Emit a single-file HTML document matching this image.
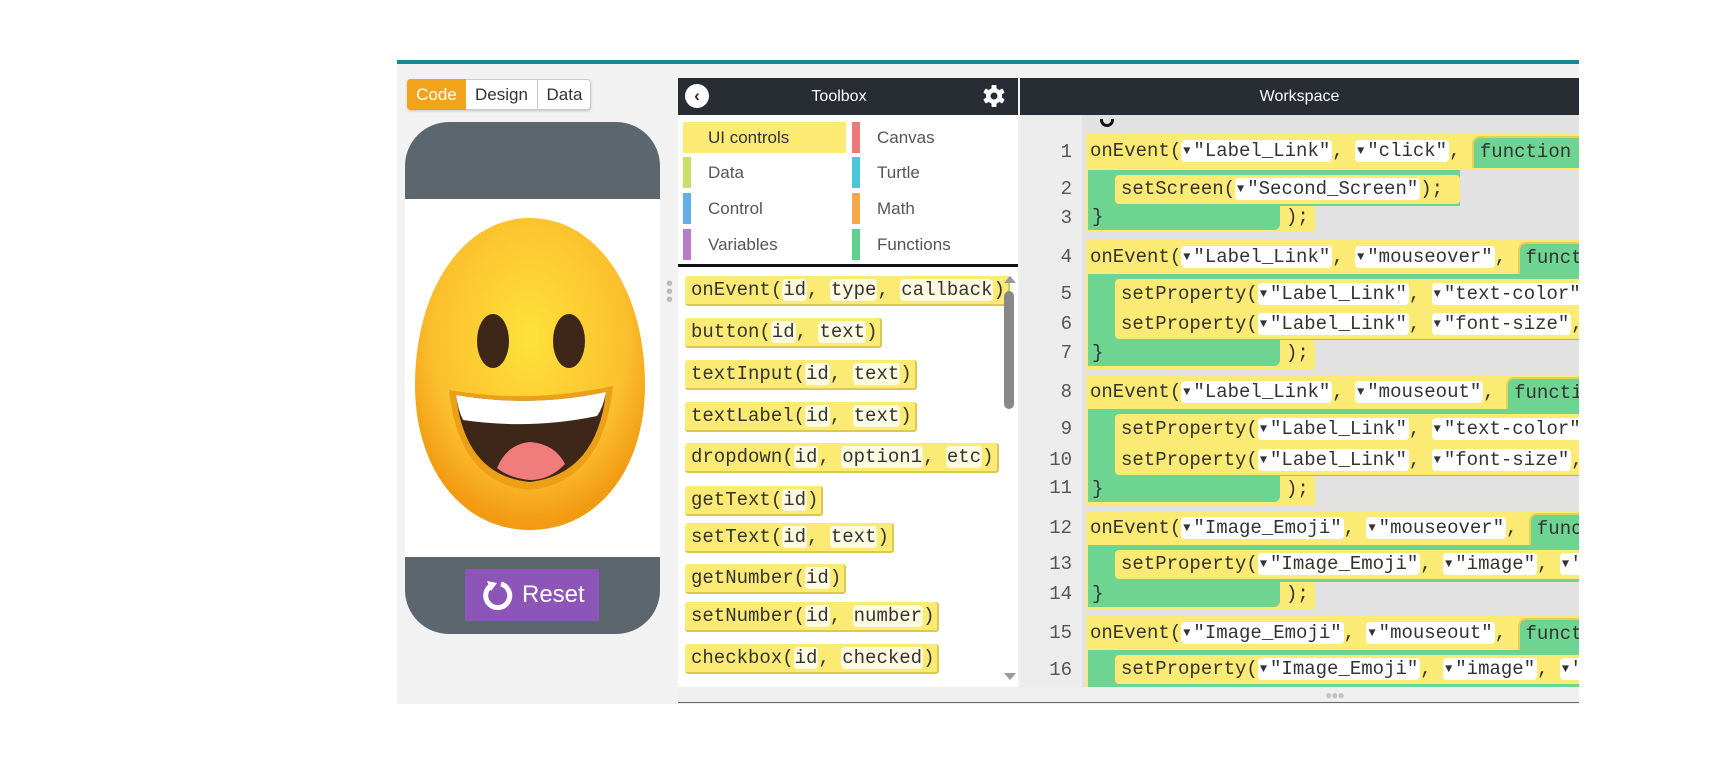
<!DOCTYPE html>
<html><head><meta charset="utf-8"><style>
*{box-sizing:border-box;margin:0;padding:0}
body{width:1715px;height:761px;background:#fff;position:relative;overflow:hidden;font-family:"Liberation Sans",sans-serif}
.a{position:absolute}
.mono{font-family:"Liberation Mono","DejaVu Sans Mono",monospace;font-size:19px;color:#333;white-space:nowrap}
.tb{position:absolute;left:685px;height:30px;background:#fbea73;border-bottom:2px solid #d9c94f;border-right:2px solid #d9c94f;border-radius:3px;padding:0 3px 0 6px;line-height:28px}
.p{background:#fffbe0;border-radius:4px;padding:0 1px}
.s{background:#fff;border-radius:4px;padding:0 2px}
.tri{font-size:12px;vertical-align:2px;margin-right:3px}
.ln{position:absolute;left:1034px;width:38px;text-align:right;font-family:"Liberation Mono",monospace;font-size:19px;color:#555}
.y{background:#fbea73}
.g{background:#6dd492}
.fn{display:inline-block;background:#6dd492;border-top:2px solid #e2d25a;border-left:2px solid #e2d25a;border-radius:8px 0 0 0;height:32px;line-height:28px;padding-left:6px;width:300px;vertical-align:top;margin-top:2px}
.cat{position:absolute;font-size:17px;color:#555;height:31px;line-height:31px}
.bar{position:absolute;width:8px;height:31px}
</style></head><body>
<!-- frame -->
<div class="a" style="left:397px;top:60px;width:1182px;height:4px;background:#138a93"></div>
<div class="a" style="left:397px;top:64px;width:1182px;height:640px;background:#f2f2f2"></div>

<!-- tabs -->
<div class="a" style="left:407px;top:79px;width:184px;height:31px;border:1px solid #ccc;border-radius:4px;background:#fff;box-shadow:0 1px 2px rgba(0,0,0,.2)"></div>
<div class="a" style="left:407px;top:79px;width:59px;height:31px;background:#f4a31c;border-radius:4px 0 0 4px;color:#fff;font-size:17px;line-height:31px;text-align:center">Code</div>
<div class="a" style="left:466px;top:79px;width:72px;height:31px;border-right:1px solid #ccc;color:#333;font-size:17px;line-height:31px;text-align:center">Design</div>
<div class="a" style="left:538px;top:79px;width:53px;height:31px;color:#333;font-size:17px;line-height:31px;text-align:center">Data</div>

<!-- phone -->
<div class="a" style="left:405px;top:122px;width:255px;height:512px;background:#5b666e;border-radius:44px"></div>
<div class="a" style="left:405px;top:199px;width:255px;height:358px;background:#fff"></div>
<svg class="a" style="left:405px;top:199px" width="255" height="358" viewBox="408 199 255 358">
<defs><radialGradient id="eg" cx="0.5" cy="0.38" r="0.6"><stop offset="0" stop-color="#fde23a"/><stop offset="0.7" stop-color="#fbc02d"/><stop offset="1" stop-color="#f29a12"/></radialGradient></defs>
<path d="M533 218 C600 218 648 290 648 385 C648 470 600 530 533 530 C466 530 418 470 418 385 C418 290 466 218 533 218Z" fill="url(#eg)"/>
<ellipse cx="496" cy="341" rx="16" ry="27" fill="#3e2719"/>
<ellipse cx="572" cy="341" rx="16" ry="27" fill="#3e2719"/>
<path d="M452 390 Q533 404 616 386 Q606 482 533 490 Q462 484 452 390Z" fill="#eba018"/>
<path d="M459 395 Q533 408 609 392 Q600 474 533 482 Q468 476 459 395Z" fill="#3e2719"/>
<path d="M459 395 Q533 408 609 392 Q606 408 600 416 Q533 430 466 420 Q461 410 459 395Z" fill="#fff"/>
<path d="M500 468 Q510 444 533 442 Q558 444 568 464 Q553 480 533 480 Q512 478 500 468Z" fill="#f07c7c"/>
</svg>
<div class="a" style="left:465px;top:569px;width:134px;height:52px;background:#8e55b9;border-radius:2px;color:#fff;font-size:24px;line-height:52px;padding-left:57px">Reset</div>
<svg class="a" style="left:481px;top:579px" width="32" height="32" viewBox="0 0 32 32"><path d="M11 6 A12 12 0 1 0 20 5" fill="none" stroke="#fff" stroke-width="5"/><path d="M6 2 L16 4 L10 12Z" fill="#fff"/></svg>

<!-- toolbox -->
<div class="a" style="left:678px;top:78px;width:340px;height:37px;background:#272d33"></div>
<div class="a" style="left:685px;top:84px;width:24px;height:24px;border-radius:50%;background:#fff;color:#272d33;font-size:17px;line-height:24px;text-align:center;font-weight:bold">‹</div>
<div class="a" style="left:778px;top:78px;width:122px;text-align:center;color:#fff;font-size:16px;line-height:37px">Toolbox</div>
<svg class="a" style="left:982px;top:84px" width="24" height="24" viewBox="0 0 24 24"><g fill="#fff"><circle cx="12" cy="12" r="8"/><rect x="9.5" y="1" width="5" height="22" rx="1"/><rect x="9.5" y="1" width="5" height="22" rx="1" transform="rotate(60 12 12)"/><rect x="9.5" y="1" width="5" height="22" rx="1" transform="rotate(120 12 12)"/></g><circle cx="12" cy="12" r="3.5" fill="#272d33"/></svg>
<div class="a" style="left:678px;top:115px;width:340px;height:149px;background:#fff"></div>
<div class="a" style="left:683px;top:122px;width:163px;height:31px;background:#fbea73"></div>
<div class="cat" style="left:708px;top:122px;color:#333">UI controls</div>
<div class="bar" style="left:683px;top:157px;background:#c8df6a"></div><div class="cat" style="left:708px;top:157px">Data</div>
<div class="bar" style="left:683px;top:193px;background:#64aee8"></div><div class="cat" style="left:708px;top:193px">Control</div>
<div class="bar" style="left:683px;top:229px;background:#b97ccb"></div><div class="cat" style="left:708px;top:229px">Variables</div>
<div class="bar" style="left:852px;top:122px;background:#ef7878"></div><div class="cat" style="left:877px;top:122px">Canvas</div>
<div class="bar" style="left:852px;top:157px;background:#4dc8db"></div><div class="cat" style="left:877px;top:157px">Turtle</div>
<div class="bar" style="left:852px;top:193px;background:#f6a64b"></div><div class="cat" style="left:877px;top:193px">Math</div>
<div class="bar" style="left:852px;top:229px;background:#5fd08e"></div><div class="cat" style="left:877px;top:229px">Functions</div>
<div class="a" style="left:678px;top:264px;width:340px;height:3px;background:#111"></div>
<div class="a" style="left:678px;top:267px;width:340px;height:420px;background:#fff"></div>
<div class="a mono" style="left:0;top:0">
<div class="tb" style="top:276px">onEvent(<span class="p">id</span>, <span class="p">type</span>, <span class="p">callback</span>)</div>
<div class="tb" style="top:318px">button(<span class="p">id</span>, <span class="p">text</span>)</div>
<div class="tb" style="top:360px">textInput(<span class="p">id</span>, <span class="p">text</span>)</div>
<div class="tb" style="top:402px">textLabel(<span class="p">id</span>, <span class="p">text</span>)</div>
<div class="tb" style="top:443px">dropdown(<span class="p">id</span>, <span class="p">option1</span>, <span class="p">etc</span>)</div>
<div class="tb" style="top:486px">getText(<span class="p">id</span>)</div>
<div class="tb" style="top:523px">setText(<span class="p">id</span>, <span class="p">text</span>)</div>
<div class="tb" style="top:564px">getNumber(<span class="p">id</span>)</div>
<div class="tb" style="top:602px">setNumber(<span class="p">id</span>, <span class="p">number</span>)</div>
<div class="tb" style="top:644px">checkbox(<span class="p">id</span>, <span class="p">checked</span>)</div>
</div>
<div class="a" style="left:1004px;top:276px;width:0;height:0;border-left:6px solid transparent;border-right:6px solid transparent;border-bottom:7px solid #999"></div>
<div class="a" style="left:1004px;top:291px;width:10px;height:118px;background:#888;border-radius:5px"></div>
<div class="a" style="left:1004px;top:673px;width:0;height:0;border-left:6px solid transparent;border-right:6px solid transparent;border-top:7px solid #999"></div>
<div class="a" style="left:666px;top:280px;color:#bbb;font-size:20px;line-height:8px;width:8px">•<br>•<br>•</div>

<!-- workspace -->
<div class="a" style="left:1020px;top:78px;width:559px;height:37px;background:#272d33;color:#fff;font-size:16px;line-height:37px;text-align:center">Workspace</div>
<div class="a" style="left:1020px;top:115px;width:559px;height:572px;background:#e2e2e2;overflow:hidden">
 <div class="a" style="left:0;top:0;width:62px;height:572px;background:#ececec"></div>
 <div class="a mono" style="left:-1026px;top:-115px;width:1589px;height:687px">
  <!-- E1 -->
  <div class="a y" style="left:1092px;top:134px;width:229px;height:98px"></div>
  <div class="a y" style="left:1092px;top:134px;width:497px;height:36px;line-height:34px;padding-left:4px;border-radius:6px 0 0 0">onEvent(<span class="s"><span class="tri">▼</span>"Label_Link"</span>, <span class="s"><span class="tri">▼</span>"click"</span>, <span class="fn">function</span></div>
  <div class="a g" style="left:1094px;top:170px;width:372px;height:36px"></div>
  <div class="a y" style="left:1121px;top:175px;width:345px;height:29px;line-height:29px;padding-left:6px;border-radius:4px">setScreen(<span class="s"><span class="tri">▼</span>"Second_Screen"</span>);</div>
  <div class="a g" style="left:1094px;top:204px;width:192px;height:26px;line-height:26px;padding-left:4px;border-radius:0 0 6px 0">}</div>
  <div class="a" style="left:1292px;top:204px;line-height:26px">);</div>
  <!-- E2 -->
  <div class="a y" style="left:1092px;top:240px;width:229px;height:130px"></div>
  <div class="a y" style="left:1092px;top:240px;width:497px;height:34px;line-height:34px;padding-left:4px">onEvent(<span class="s"><span class="tri">▼</span>"Label_Link"</span>, <span class="s"><span class="tri">▼</span>"mouseover"</span>, <span class="fn">function</span></div>
  <div class="a g" style="left:1094px;top:274px;width:497px;height:66px"></div>
  <div class="a y" style="left:1121px;top:279px;width:470px;height:60px;border-radius:4px"></div>
  <div class="a" style="left:1127px;top:280px;line-height:29px">setProperty(<span class="s"><span class="tri">▼</span>"Label_Link"</span>, <span class="s"><span class="tri">▼</span>"text-color"</span>, <span class="s">x</span></div>
  <div class="a" style="left:1127px;top:310px;line-height:29px">setProperty(<span class="s"><span class="tri">▼</span>"Label_Link"</span>, <span class="s"><span class="tri">▼</span>"font-size"</span>, <span class="s">x</span></div>
  <div class="a g" style="left:1094px;top:340px;width:192px;height:26px;line-height:26px;padding-left:4px;border-radius:0 0 6px 0">}</div>
  <div class="a" style="left:1292px;top:340px;line-height:26px">);</div>
  <!-- E3 -->
  <div class="a y" style="left:1092px;top:375px;width:229px;height:130px"></div>
  <div class="a y" style="left:1092px;top:375px;width:497px;height:34px;line-height:34px;padding-left:4px">onEvent(<span class="s"><span class="tri">▼</span>"Label_Link"</span>, <span class="s"><span class="tri">▼</span>"mouseout"</span>, <span class="fn">function</span></div>
  <div class="a g" style="left:1094px;top:409px;width:497px;height:67px"></div>
  <div class="a y" style="left:1121px;top:414px;width:470px;height:61px;border-radius:4px"></div>
  <div class="a" style="left:1127px;top:415px;line-height:29px">setProperty(<span class="s"><span class="tri">▼</span>"Label_Link"</span>, <span class="s"><span class="tri">▼</span>"text-color"</span>, <span class="s">x</span></div>
  <div class="a" style="left:1127px;top:446px;line-height:29px">setProperty(<span class="s"><span class="tri">▼</span>"Label_Link"</span>, <span class="s"><span class="tri">▼</span>"font-size"</span>, <span class="s">x</span></div>
  <div class="a g" style="left:1094px;top:476px;width:192px;height:26px;line-height:26px;padding-left:4px;border-radius:0 0 6px 0">}</div>
  <div class="a" style="left:1292px;top:476px;line-height:26px">);</div>
  <!-- E4 -->
  <div class="a y" style="left:1092px;top:511px;width:229px;height:98px"></div>
  <div class="a y" style="left:1092px;top:511px;width:497px;height:34px;line-height:34px;padding-left:4px">onEvent(<span class="s"><span class="tri">▼</span>"Image_Emoji"</span>, <span class="s"><span class="tri">▼</span>"mouseover"</span>, <span class="fn">function</span></div>
  <div class="a g" style="left:1094px;top:545px;width:497px;height:37px"></div>
  <div class="a y" style="left:1121px;top:550px;width:470px;height:29px;line-height:29px;padding-left:6px;border-radius:4px">setProperty(<span class="s"><span class="tri">▼</span>"Image_Emoji"</span>, <span class="s"><span class="tri">▼</span>"image"</span>, <span class="s"><span class="tri">▼</span>"x"</span></div>
  <div class="a g" style="left:1094px;top:582px;width:192px;height:25px;line-height:25px;padding-left:4px;border-radius:0 0 6px 0">}</div>
  <div class="a" style="left:1292px;top:582px;line-height:25px">);</div>
  <!-- E5 -->
  <div class="a y" style="left:1092px;top:616px;width:497px;height:80px"></div>
  <div class="a y" style="left:1092px;top:616px;width:497px;height:34px;line-height:34px;padding-left:4px">onEvent(<span class="s"><span class="tri">▼</span>"Image_Emoji"</span>, <span class="s"><span class="tri">▼</span>"mouseout"</span>, <span class="fn">function</span></div>
  <div class="a g" style="left:1094px;top:650px;width:497px;height:40px"></div>
  <div class="a y" style="left:1121px;top:655px;width:470px;height:29px;line-height:29px;padding-left:6px;border-radius:4px">setProperty(<span class="s"><span class="tri">▼</span>"Image_Emoji"</span>, <span class="s"><span class="tri">▼</span>"image"</span>, <span class="s"><span class="tri">▼</span>"x"</span></div>
 </div>
 <div class="a" style="left:80px;top:4px;width:14px;height:8px;border:3px solid #111;border-top:none;border-radius:0 0 8px 8px"></div>
</div>
<div class="ln" style="top:141px">1</div>
<div class="ln" style="top:178px">2</div>
<div class="ln" style="top:207px">3</div>
<div class="ln" style="top:246px">4</div>
<div class="ln" style="top:283px">5</div>
<div class="ln" style="top:313px">6</div>
<div class="ln" style="top:342px">7</div>
<div class="ln" style="top:381px">8</div>
<div class="ln" style="top:418px">9</div>
<div class="ln" style="top:449px">10</div>
<div class="ln" style="top:477px">11</div>
<div class="ln" style="top:517px">12</div>
<div class="ln" style="top:553px">13</div>
<div class="ln" style="top:583px">14</div>
<div class="ln" style="top:622px">15</div>
<div class="ln" style="top:659px">16</div>

<!-- bottom strip -->
<div class="a" style="left:678px;top:687px;width:901px;height:16px;background:#efefef"></div>
<div class="a" style="left:678px;top:702px;width:901px;height:1px;background:#666"></div>
<div class="a" style="left:1325px;top:688px;color:#c4c4c4;font-size:12px;letter-spacing:-1px">●●●</div>
</body></html>
